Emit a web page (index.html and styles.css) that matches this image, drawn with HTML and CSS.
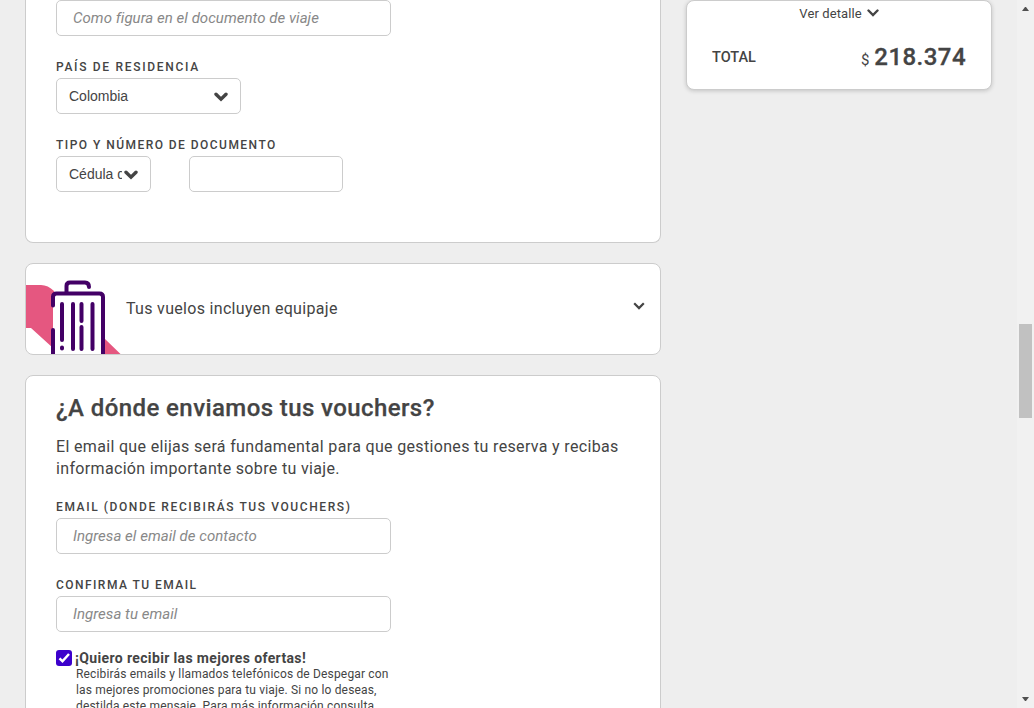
FILE: index.html
```html
<!DOCTYPE html>
<html lang="es">
<head>
<meta charset="utf-8">
<title>Finaliza tu compra</title>
<link rel="stylesheet" href="styles.css">
</head>
<body>
<div class="page">
  <main class="checkout">
    <section class="card traveler">
      <input class="field wide" type="text" placeholder="Como figura en el documento de viaje">
      <label class="label label-country">PAÍS DE RESIDENCIA</label>
      <div class="select select-country">
        <select><option>Colombia</option></select>
        <svg class="select-arrow" viewBox="0 0 14 10"><path d="M2 2.200 7 7.200 12 2.200"/></svg>
      </div>
      <label class="label label-document">TIPO Y NÚMERO DE DOCUMENTO</label>
      <div class="document-row">
        <div class="select select-document">
          <select><option>Cédula de ciudadanía</option></select>
          <svg class="select-arrow" viewBox="0 0 14 10"><path d="M2 2.200 7 7.200 12 2.200"/></svg>
        </div>
        <input class="field document-number" type="text">
      </div>
    </section>

    <section class="card luggage">
      <svg class="suitcase" viewBox="0 0 95 90">
        <path class="splash" d="M0 21H15Q22 21 28 27L27 84 5 64H0ZM78 74 94.500 90H78Z"/>
        <path class="shell" d="M27 29H78V90H27Z"/>
        <g class="outline">
          <path d="M27 41.500V33Q27 29.500 30.500 29.500H73.500Q77 29.500 77 33V92M27 66V92"/>
          <path d="M40.500 28V22Q40.500 18.500 44 18.500H59Q63 18.500 63 23"/>
          <path d="M36 40V76M36 83.500V84.500M47 40V85M55.500 40V57M55.500 63V85M66.500 40V85"/>
        </g>
      </svg>
      <span class="luggage-text">Tus vuelos incluyen equipaje</span>
      <svg class="luggage-arrow" viewBox="0 0 12 8"><path d="M1.200 1.300 6 6.100 10.800 1.300"/></svg>
    </section>

    <section class="card vouchers">
      <h2 class="title">¿A dónde enviamos tus vouchers?</h2>
      <p class="intro">El email que elijas será fundamental para que gestiones tu reserva y recibas<br>información importante sobre tu viaje.</p>
      <label class="label label-email">EMAIL (DONDE RECIBIRÁS TUS VOUCHERS)</label>
      <input class="field wide" type="email" placeholder="Ingresa el email de contacto">
      <label class="label label-confirm">CONFIRMA TU EMAIL</label>
      <input class="field wide" type="email" placeholder="Ingresa tu email">
      <div class="offers">
        <svg class="checkbox" viewBox="0 0 16 16"><rect width="16" height="16" rx="3"/><path d="M3.500 8.300 6.500 11.300 13 4"/></svg>
        <div class="offers-text">
          <strong class="offers-title">¡Quiero recibir las mejores ofertas!</strong>
          <p class="offers-note">Recibirás emails y llamados telefónicos de Despegar con<br>las mejores promociones para tu viaje. Si no lo deseas,<br>destilda este mensaje. Para más información consulta</p>
        </div>
      </div>
    </section>
  </main>

  <aside class="summary">
    <div class="detail">
      <span class="detail-text">Ver detalle</span>
      <svg class="detail-arrow" viewBox="0 0 12 8"><path d="M1.500 1.500 6 6 10.500 1.500"/></svg>
    </div>
    <div class="total">
      <span class="total-label">TOTAL</span>
      <span class="price"><span class="currency">$</span><span class="amount">218.374</span></span>
    </div>
  </aside>

  <div class="scrollbar">
    <svg class="scroll-arrow" viewBox="0 0 7 4"><path d="M3 0h1l3 4H0z"/></svg>
    <div class="thumb"></div>
    <svg class="scroll-arrow" viewBox="0 0 7 4"><path d="M0 0h7L4 4H3z"/></svg>
  </div>
</div>
</body>
</html>
```
FILE: styles.css
```css
* { box-sizing: border-box; }

body {
  margin: 0;
  height: 708px;
  overflow: hidden;
  background: #eee;
  color: #444;
  font-family: Roboto, "Liberation Sans", sans-serif;
}

p, h2 { margin: 0; }
svg { display: block; flex: none; }
path { fill: none; }

.page {
  display: flex;
  align-items: flex-start;
  height: 708px;
  padding-left: 25px;
  overflow: hidden;
}

.checkout { width: 636px; flex: none; }

.card {
  background: #fff;
  border: 1px solid #ccc;
  border-radius: 8px;
}

.traveler {
  height: 243px;
  padding-left: 30px;
  border-top: 0;
  border-radius: 0 0 8px 8px;
}

.label {
  display: block;
  height: 20px;
  line-height: 20px;
  font-size: 12px;
  font-weight: 500;
  white-space: nowrap;
  color: #444;
}

.label-country { margin-top: 21px; letter-spacing: 1.69px; }
.label-document { margin-top: 21px; letter-spacing: 1.46px; }
.label-email { margin-top: 17px; letter-spacing: 1.6px; }
.label-confirm { margin-top: 21px; letter-spacing: 1.45px; }

.field {
  display: block;
  height: 36px;
  padding: 0 16px;
  border: 1px solid #ccc;
  border-radius: 5px;
  background: #fff;
  font: 15px Roboto, sans-serif;
}

.field::placeholder { color: #888; font-style: italic; letter-spacing: .04px; opacity: 1; }
.wide { width: 335px; }

.select {
  display: flex;
  align-items: center;
  height: 36px;
  margin-top: 1px;
  padding: 0 12px;
  border: 1px solid #ccc;
  border-radius: 5px;
  background: #fff;
}

.label + .field { margin-top: 1px; }

.select select {
  flex: 1;
  min-width: 0;
  height: 34px;
  margin-right: 2px;
  padding: 0;
  border: 0;
  appearance: none;
  background: none;
  color: #444;
  font: 14px "Liberation Sans", sans-serif;
}

.select-country { width: 185px; }
.select-document { width: 95px; }
.select-arrow { width: 14px; height: 10px; margin-top: 2px; }
.select-arrow path { stroke: #444; stroke-width: 3.4; stroke-linecap: round; }

.document-row { display: flex; gap: 38px; margin-top: 1px; }
.document-row .select { margin-top: 0; }
.document-number { width: 154px; }

.luggage {
  display: flex;
  height: 92px;
  margin-top: 20px;
  overflow: hidden;
}

.suitcase { width: 95px; height: 90px; }
.splash { fill: #e55780; }
.shell { fill: #fff; }
.outline path { stroke: #430066; stroke-width: 4; stroke-linecap: round; }

.luggage-text {
  flex: 1;
  margin-left: 5px;
  line-height: 90px;
  font-size: 16px;
  letter-spacing: .31px;
}

.luggage-arrow { width: 12px; height: 8px; margin: 38px 15px 0 0; }
.luggage-arrow path { stroke: #444; stroke-width: 2.2; }

.vouchers { height: 400px; margin-top: 20px; padding: 18px 30px; }

.title {
  line-height: 28px;
  font-size: 24px;
  font-weight: 500;
  letter-spacing: .41px;
  white-space: nowrap;
  -webkit-text-stroke: .25px #444;
}

.intro { margin-top: 14px; font-size: 16px; line-height: 22px; white-space: nowrap; letter-spacing: .335px; }

.offers { display: flex; gap: 3px; margin-top: 18px; }
.checkbox { width: 16px; height: 16px; }
.checkbox rect { fill: #3c00cc; }
.checkbox path { stroke: #fff; stroke-width: 2.5; }
.offers-text { white-space: nowrap; }
.offers-title { display: block; height: 16px; line-height: 17px; font-size: 14px; font-weight: 700; letter-spacing: .36px; }
.offers-note { padding-left: 1px; font-size: 12px; line-height: 16px; letter-spacing: .165px; }

.summary {
  width: 306px;
  height: 90px;
  margin-left: 25px;
  flex: none;
  border: 1px solid #ccc;
  border-radius: 8px;
  background: #fff;
  box-shadow: 0 1px 4px rgba(0, 0, 0, .18);
}

.detail { display: flex; align-items: center; justify-content: center; gap: 5px; height: 24px; font-size: 13px; letter-spacing: .1px; }
.detail-arrow { width: 12px; height: 8px; }
.detail-arrow path { stroke: #444; stroke-width: 2.4; stroke-linecap: round; }
.total { display: flex; align-items: center; justify-content: space-between; height: 64px; padding: 0 25px; }
.total-label { font-size: 14.5px; font-weight: 500; }
.price { display: flex; align-items: baseline; gap: 5px; }
.currency { font-size: 15px; }
.amount { font-size: 24px; font-weight: 500; letter-spacing: .45px; -webkit-text-stroke: .3px #444; }

.scrollbar {
  display: flex;
  flex-direction: column;
  align-items: center;
  justify-content: space-between;
  width: 17px;
  height: 708px;
  margin-left: auto;
  padding: 7px 0;
  background: #f1f1f1;
}

.thumb { width: 13px; height: 94px; margin-top: 34px; background: #c1c1c1; }
.scroll-arrow { width: 7px; height: 4px; }
.scroll-arrow path { fill: #505050; }
```
